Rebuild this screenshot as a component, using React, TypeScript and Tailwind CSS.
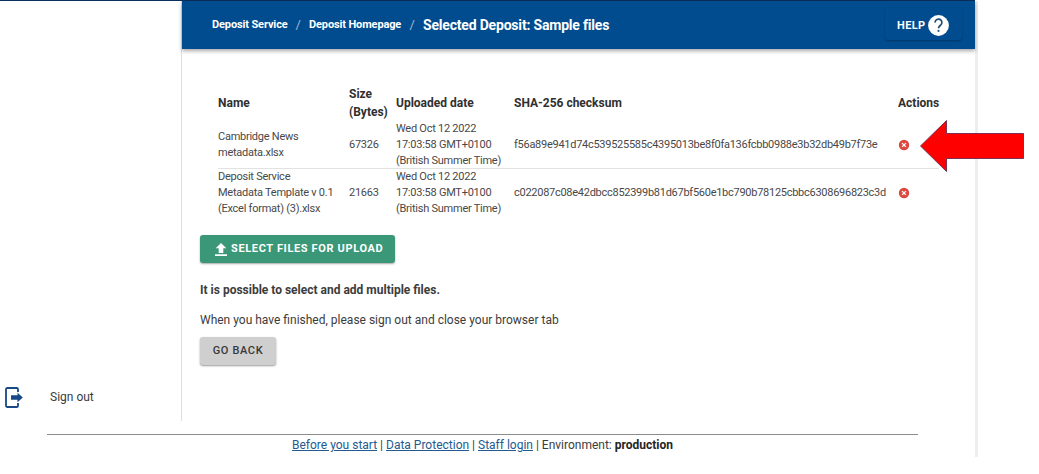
import React from "react";

const files = [
  {
    name: ["Cambridge News", "metadata.xlsx"],
    size: "67326",
    sum: "f56a89e941d74c539525585c4395013be8f0fa136fcbb0988e3b32db49b7f73e",
  },
  {
    name: ["Deposit Service", "Metadata Template v 0.1", "(Excel format) (3).xlsx"],
    size: "21663",
    sum: "c022087c08e42dbcc852399b81d67bf560e1bc790b78125cbbc6308696823c3d",
  },
];
const uploaded = ["Wed Oct 12 2022", "17:03:58 GMT+0100", "(British Summer Time)"];

function Lines({ items }: { items: string[] }) {
  return (
    <div>
      {items.map((line) => (
        <div key={line}>{line}</div>
      ))}
    </div>
  );
}

function DeleteIcon() {
  return (
    <svg className="block h-3 w-3" viewBox="0 0 12 12">
      <circle cx="6" cy="6" r="5.2" fill="#dc4840" />
      <path d="M4.1 4.1l3.8 3.8M7.9 4.1L4.1 7.9" stroke="#fff" strokeWidth="1.3" />
    </svg>
  );
}

function Header() {
  return (
    <header className="flex h-12 items-center bg-[#004c8f] pl-[30px] pr-[13px] text-white shadow-[0_2px_4px_rgba(0,0,0,0.35)]">
      <nav className="flex flex-1 items-center whitespace-nowrap text-[11px] font-bold tracking-[-0.13px]">
        <a className="w-[75px] shrink-0">Deposit Service</a>
        <span className="w-[22px] text-center text-[13px] font-normal text-[#9dbcd8]">/</span>
        <a className="w-[92px] shrink-0">Deposit Homepage</a>
        <span className="w-[22px] text-center text-[13px] font-normal text-[#9dbcd8]">/</span>
        <span className="text-[14px] tracking-[-0.19px]">Selected Deposit: Sample files</span>
      </nav>
      <button className="mt-[-3px] flex h-8 w-[77px] items-center rounded-[3px] pl-[12px] pt-[4px] text-[11px] font-bold tracking-[0.38px] shadow-[0_1px_2px_rgba(0,0,0,0.28)]">
        <span className="pt-px">HELP</span>
        <svg className="ml-[2px] block h-[21px] w-[21px] shrink-0" viewBox="0 0 21 21">
          <circle cx="10.5" cy="10.5" r="10.4" fill="#fff" />
          <path d="M7.1 7.6a3.4 3.4 0 1 1 5.4 2.6c-1.2.9-2 1.5-2 3" fill="none" stroke="#1f4c78" strokeWidth="1.7" />
          <rect x="9.6" y="14.9" width="1.8" height="1.9" fill="#1f4c78" />
        </svg>
      </button>
    </header>
  );
}

function FileTable() {
  return (
    <div className="ml-[36px] w-[721px]">
      <div className="grid h-9 grid-cols-[131px_47px_118px_383px_1fr] items-center text-[12px] font-bold leading-[18px] text-[#303030]">
        <div>Name</div>
        <Lines items={["Size", "(Bytes)"]} />
        <div>Uploaded date</div>
        <div>SHA-256 checksum</div>
        <div className="pl-px">Actions</div>
      </div>
      {files.map((file, i) => (
        <div
          key={file.sum}
          className={
            "grid grid-cols-[131px_47px_118px_384px_1fr] items-center whitespace-nowrap text-[11px] leading-4 tracking-[-0.25px] text-[#484848] " +
            (i === 0 ? "h-12 border-b border-[#e2e2e2]" : "h-12")
          }
        >
          <Lines items={file.name} />
          <div>{file.size}</div>
          <Lines items={uploaded} />
          <div className="tracking-[-0.27px]">{file.sum}</div>
          <div>
            <DeleteIcon />
          </div>
        </div>
      ))}
    </div>
  );
}

export default function App() {
  return (
    <div className="relative h-[474px] w-[1039px] overflow-hidden bg-white font-[Roboto,sans-serif] text-[12px] text-[#3c3c3c]">
      <div className="flex h-[457px] w-[978px] flex-col">
        <div className="h-px w-[975px] shrink-0 bg-[#0a2f5c]" />
        <div className="flex flex-1 flex-col border-r-[3px] border-[#eeeeee]">
          <div className="flex h-[420px]">
            <aside className="flex w-[181px] shrink-0 flex-col justify-end pb-[13px]">
              <a className="flex items-center pl-[5px]">
                <svg className="block h-[21px] w-[19px] shrink-0" viewBox="0 0 19 21" fill="none">
                  <path d="M13 5V2.3A1.3 1.3 0 0 0 11.7 1H2.3A1.3 1.3 0 0 0 1 2.3v16.4A1.3 1.3 0 0 0 2.3 20h9.4a1.3 1.3 0 0 0 1.3-1.3V16" stroke="#164985" strokeWidth="1.8" />
                  <path d="M6 8.3h6.5V5.8l5.3 4.7-5.3 4.7v-2.5H6z" fill="#164985" />
                </svg>
                <span className="ml-[26px] pb-[2px]">Sign out</span>
              </a>
            </aside>
            <main className="flex-1 border-l border-[#dedede]">
              <Header />
              <div className="h-9" />
              <FileTable />
              <div className="flex flex-col items-start pl-[18px] pt-[18px]">
                <button className="flex h-[28px] w-[195px] items-center whitespace-nowrap rounded-[3px] bg-[#3a9777] pl-[15px] text-[11px] font-bold tracking-[0.64px] text-white shadow-[0_1px_2px_rgba(0,0,0,0.35)]">
                  <svg className="mr-[4px] block h-[13px] w-[12px] shrink-0" viewBox="0 0 12 13" fill="#fff">
                    <path d="M6 0L.7 5.3h3V10h4.6V5.3h3zM0 11.2h12V13H0z" />
                  </svg>
                  SELECT FILES FOR UPLOAD
                </button>
                <p className="mt-[18px] h-[18px] font-bold leading-[18px]">It is possible to select and add multiple files.</p>
                <p className="mt-[12px] h-[18px] leading-[18px]">When you have finished, please sign out and close your browser tab</p>
                <button className="mt-[8px] h-[28px] w-[76px] whitespace-nowrap rounded-[3px] bg-[#cfcfcf] pt-px text-[11px] font-medium tracking-[0.63px] text-[#383838] shadow-[0_1px_2px_rgba(0,0,0,0.4)]">
                  GO BACK
                </button>
              </div>
            </main>
          </div>
          <footer className="ml-[47px] mt-[13px] w-[871px] border-t border-[#8c8c8c] pt-px text-center leading-[18px]">
            <a className="text-[#235a8f] underline">Before you start</a> | <a className="text-[#235a8f] underline">Data Protection</a> |{" "}
            <a className="text-[#235a8f] underline">Staff login</a> | Environment: <b className="text-[#252525]">production</b>
          </footer>
        </div>
      </div>
      <svg className="absolute left-[919px] top-[119px] h-[54px] w-[106px]" viewBox="0 0 106 54">
        <path d="M1.5 27L27.5 1.5v13h77v25h-77v13z" fill="#fe0000" stroke="#7b3150" strokeWidth="1" />
      </svg>
    </div>
  );
}
